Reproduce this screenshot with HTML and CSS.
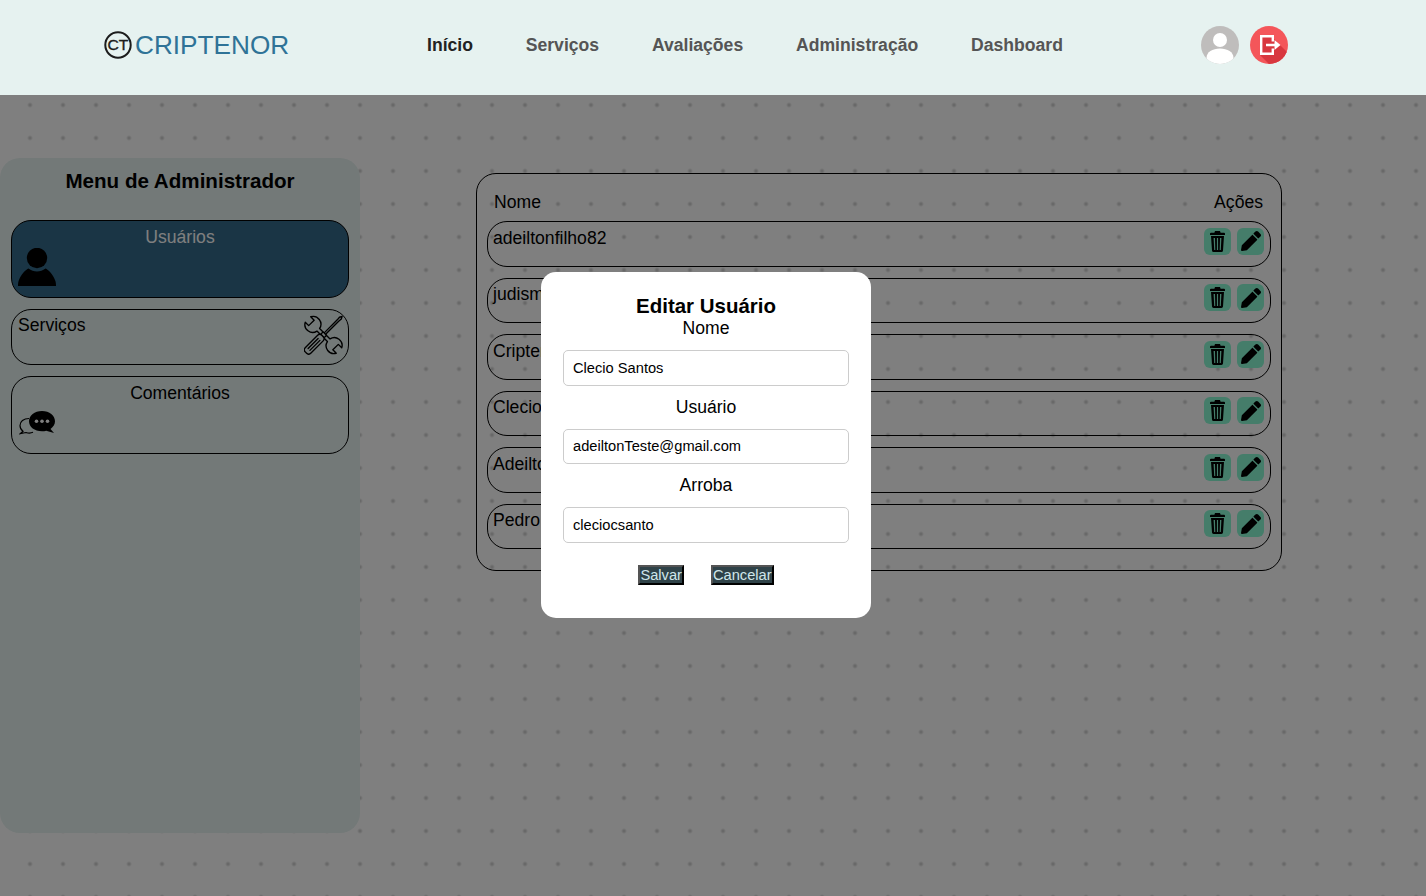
FILE: index.html
```html
<!DOCTYPE html>
<html lang="pt-BR">
<head>
<meta charset="utf-8">
<title>Criptenor</title>
<link rel="stylesheet" href="styles.css">
</head>
<body>
<svg class="sprites" width="0" height="0" aria-hidden="true">
  <symbol id="trash" viewBox="0 0 15 21">
    <path d="M5 0h5l.6 1.700H14a1 1 0 0 1 1 1V4H0V2.700a1 1 0 0 1 1-1h3.400z"/>
    <path fill-rule="evenodd" d="M1 5h13l-1 14.500A1.600 1.600 0 0 1 11.400 21H3.600A1.600 1.600 0 0 1 2 19.500zM3.600 7l.6 12h1.100L5 7zM6.900 7v12h1.200V7zM10 7l-.3 12h1.100l.6-12z"/>
  </symbol>
  <symbol id="pencil" viewBox="0 0 512 512">
    <path d="M497.900 142.100l-46.100 46.100c-4.700 4.700-12.300 4.700-17 0l-111-111c-4.700-4.700-4.700-12.300 0-17l46.100-46.100c18.700-18.700 49.100-18.700 67.900 0l60.100 60.100c18.800 18.700 18.800 49.100 0 67.900zM284.200 99.800L21.600 362.400.4 483.900c-2.900 16.400 11.400 30.600 27.800 27.800l121.500-21.300 262.600-262.600c4.700-4.700 4.700-12.300 0-17l-111-111c-4.800-4.700-12.400-4.700-17.100 0z"/>
  </symbol>
</svg>

<header class="topbar">
  <a class="brand">
    <svg class="brand-mark" viewBox="0 0 28 28">
      <circle cx="14" cy="14" r="12.700" fill="none" stroke="#1c1c1c" stroke-width="2"/>
      <text x="14" y="18.800" text-anchor="middle" class="brand-ct" textLength="21" lengthAdjust="spacingAndGlyphs">CT</text>
    </svg>
    <span class="brand-name">CRIPTENOR</span>
  </a>
  <nav class="nav">
    <a class="nav-link is-current">Início</a>
    <a class="nav-link">Serviços</a>
    <a class="nav-link">Avaliações</a>
    <a class="nav-link">Administração</a>
    <a class="nav-link">Dashboard</a>
  </nav>
  <div class="top-icons">
    <svg class="round-icon" viewBox="0 0 38 38">
      <clipPath id="avatarClip"><circle cx="19" cy="19" r="19"/></clipPath>
      <g clip-path="url(#avatarClip)">
        <rect width="38" height="38" fill="#bfbdbc"/>
        <circle cx="19" cy="14" r="7" fill="#fff"/>
        <path d="M5.500 32c0-6 6-9.500 13.500-9.500S32.500 26 32.500 32c0 3.500-6 6-13.500 6s-13.500-2.500-13.500-6z" fill="#fff"/>
      </g>
    </svg>
    <svg class="round-icon" viewBox="0 0 38 38">
      <clipPath id="exitClip"><circle cx="19" cy="19" r="19"/></clipPath>
      <g clip-path="url(#exitClip)">
        <rect width="38" height="38" fill="#f4565a"/>
        <path d="M10 29 19 38H38V27L30 19 24 13V9H10z" fill="#d8373f"/>
        <path d="M10 9h14v6.500h-2.400v-4.100h-9.200v15.200h9.200v-4.100H24V29H10z" fill="#fff"/>
        <path d="M16 17.700h8.500V14L30.500 19l-6 5v-3.700H16z" fill="#fff"/>
      </g>
    </svg>
  </div>
</header>

<main class="page">
  <aside class="side">
    <h2 class="side-title">Menu de Administrador</h2>
    <div class="side-item tall is-active">
      <span class="side-label">Usuários</span>
      <svg class="ico-user" viewBox="0 0 38 38">
        <circle cx="19" cy="10" r="10.200"/>
        <path d="M0 38c0-1 0-3 .6-5C3 26 8 21.500 10.500 20.500c2.500 2 5.500 3 8.500 3s6-1 8.500-3C30 21.500 35 26 37.400 33c.6 2 .6 4 .6 5z"/>
      </svg>
    </div>
    <div class="side-item short">
      <span class="side-label">Serviços</span>
      <svg class="ico-tools" viewBox="0 0 40 40" stroke="#000" stroke-width="1.400" stroke-linejoin="round" stroke-linecap="round">
        <path class="tool-fill" d="M6.900 1.300 10.400 4.800 4.800 10.400 1.300 6.900A8 8 0 0 0 13.300 16L24 26.700A8 8 0 0 0 33.100 38.700L29.600 35.200 35.200 29.600 38.700 33.100A8 8 0 0 0 26.700 24L16 13.300A8 8 0 0 0 6.900 1.300Z"/>
        <g transform="translate(20 20) rotate(45)">
          <path class="tool-fill" d="M-1 -1V-21L-1.300 -24.500 0 -27 1.300 -24.500 1 -21V-1Z"/>
          <rect class="tool-fill" x="-2.500" y="-2" width="5" height="3.500" rx="1"/>
          <rect class="tool-fill" x="-4" y="1.500" width="8" height="24" rx="3"/>
          <path d="M-1.300 6.500V21M1.300 6.500V21"/>
        </g>
      </svg>
    </div>
    <div class="side-item tall">
      <span class="side-label">Comentários</span>
      <svg class="ico-chat" viewBox="0 0 36 24">
        <path fill="none" stroke="#000" stroke-width="1.200" d="M10 7.500C4.500 7.500 1 10.500 1 14.500c0 2.500 1 4.300 3 5.700L1.500 22.500 7 21.500c2.200.7 5 .7 7-.2"/>
        <path d="M23 0C15.500 0 10 4.500 10 10.300c0 5.700 5.500 10 13 10 1.500 0 3-.2 4.200-.6L35 22l-3.500-4C34.300 16 36 13.300 36 10.300 36 4.500 30.500 0 23 0z"/>
        <circle cx="17.500" cy="10.200" r="1.800" fill="#fff"/><circle cx="23" cy="10.200" r="1.800" fill="#fff"/><circle cx="28.500" cy="10.200" r="1.800" fill="#fff"/>
      </svg>
    </div>
  </aside>

  <section class="users">
    <div class="users-head"><span>Nome</span><span>Ações</span></div>
    <div class="user-row"><span>adeiltonfilho82</span><div class="acts"><button class="act"><svg class="i-trash"><use href="#trash"/></svg></button><button class="act"><svg class="i-pencil"><use href="#pencil"/></svg></button></div></div>
    <div class="user-row"><span>judismar</span><div class="acts"><button class="act"><svg class="i-trash"><use href="#trash"/></svg></button><button class="act"><svg class="i-pencil"><use href="#pencil"/></svg></button></div></div>
    <div class="user-row"><span>Criptenor</span><div class="acts"><button class="act"><svg class="i-trash"><use href="#trash"/></svg></button><button class="act"><svg class="i-pencil"><use href="#pencil"/></svg></button></div></div>
    <div class="user-row"><span>Clecio Santos</span><div class="acts"><button class="act"><svg class="i-trash"><use href="#trash"/></svg></button><button class="act"><svg class="i-pencil"><use href="#pencil"/></svg></button></div></div>
    <div class="user-row"><span>Adeilton</span><div class="acts"><button class="act"><svg class="i-trash"><use href="#trash"/></svg></button><button class="act"><svg class="i-pencil"><use href="#pencil"/></svg></button></div></div>
    <div class="user-row"><span>Pedro</span><div class="acts"><button class="act"><svg class="i-trash"><use href="#trash"/></svg></button><button class="act"><svg class="i-pencil"><use href="#pencil"/></svg></button></div></div>
  </section>
</main>

<div class="overlay"></div>

<form class="modal">
  <h3 class="modal-title">Editar Usuário</h3>
  <label class="field-label">Nome</label>
  <input class="field" value="Clecio Santos">
  <label class="field-label">Usuário</label>
  <input class="field" value="adeiltonTeste@gmail.com">
  <label class="field-label">Arroba</label>
  <input class="field" value="cleciocsanto">
  <div class="modal-actions">
    <button type="button" class="modal-btn">Salvar</button>
    <button type="button" class="modal-btn">Cancelar</button>
  </div>
</form>
</body>
</html>
```

FILE: styles.css
```css
* { box-sizing: border-box; }
html, body { margin: 0; height: 100%; }
body {
  font-family: "Liberation Sans", Arial, sans-serif;
  font-size: 17.6px;
  color: #000;
  overflow: hidden;
  background: #fff;
}
.sprites { position: absolute; }

.topbar {
  position: relative;
  z-index: 3;
  height: 95px;
  background: #e6f2f0;
  display: flex;
  align-items: center;
  padding: 0 0 5px 104px;
}
.brand { display: flex; align-items: center; gap: 3px; width: 323px; }
.brand-mark { width: 28px; height: 28px; flex: none; }
.brand-ct { font: 400 15px "Liberation Sans", Arial, sans-serif; fill: #1c1c1c; stroke: #1c1c1c; stroke-width: .35px; }
.brand-name { font-size: 26.2px; color: #2f7397; }
.nav { display: flex; gap: 52.8px; width: 774px; }
.nav-link { font-weight: 700; font-size: 17.6px; color: #555; }
.nav-link.is-current { color: #222; }
.top-icons { display: flex; gap: 11px; }
.round-icon { width: 38px; height: 38px; display: block; }

.page {
  height: 801px;
  display: flex;
  align-items: flex-start;
  background-color: #fff;
  background-image: radial-gradient(circle at center, #cdcdcd 0, #d2d2d2 1px, #fff 2.800px);
  background-size: 33px 33px;
  background-position: 13.5px -6.5px;
}
.side {
  width: 360px;
  height: 675px;
  margin-top: 63px;
  flex: none;
  background: #e6f2f0;
  border-radius: 20px;
  padding: 11px 11px 0;
}
.side-title { margin: 0 0 27px; font-size: 20.6px; line-height: 24px; font-weight: 700; text-align: center; }
.side-item {
  position: relative;
  border: 1px solid #000;
  border-radius: 20px;
  margin-bottom: 11px;
  padding: 5px 6px;
  line-height: 21px;
}
.side-item.tall { height: 78px; text-align: center; padding-top: 6px; }
.side-item.short { height: 56px; display: flex; justify-content: space-between; }
.side-item.is-active { background: #346a8a; color: #fff; }
.side-label { display: block; }
.ico-user { position: absolute; left: 6px; top: 27px; width: 38px; height: 38px; fill: #000; }
.ico-tools { width: 39px; height: 40px; flex: none; margin: 0 -1px 0 0; }
.tool-fill { fill: #e6f2f0; }
.ico-chat { position: absolute; left: 7px; top: 34px; width: 36px; height: 24px; }

.users {
  width: 806px;
  margin: 78px 0 0 116px;
  flex: none;
  border: 1px solid #000;
  border-radius: 20px;
  padding: 18px 10px 20.5px;
}
.users-head {
  display: flex;
  justify-content: space-between;
  padding: 0 8px 0 7px;
  line-height: 21px;
  margin-bottom: 8px;
}
.user-row {
  height: 45.5px;
  border: 1px solid #000;
  border-radius: 20px;
  display: flex;
  justify-content: space-between;
  align-items: flex-start;
  padding: 5.9px 6px 0 5px;
  line-height: 21px;
  margin-bottom: 11px;
}
.user-row:last-child { margin-bottom: 0; }
.acts { display: flex; gap: 6px; }
.act {
  width: 27px;
  height: 27px;
  padding: 0;
  border: 0;
  border-radius: 6px;
  background: #8afad4;
  display: flex;
  align-items: center;
  justify-content: center;
}
.i-trash { width: 15px; height: 21px; fill: #000; }
.i-pencil { width: 20px; height: 20px; fill: #000; }

.overlay {
  position: fixed;
  inset: 0;
  z-index: 1;
  background: rgba(0, 0, 0, .5);
}
.modal {
  position: fixed;
  z-index: 2;
  left: 541px;
  top: 272px;
  width: 330px;
  height: 346px;
  background: #fff;
  border-radius: 15px;
  padding: 22px;
  text-align: center;
}
.modal-title { margin: 0; font-size: 20.48px; line-height: 24px; font-weight: 700; }
.field-label { display: block; line-height: 21px; }
.field {
  display: block;
  width: 100%;
  height: 35.6px;
  margin: 11px 0;
  padding: 0 9px;
  border: 1px solid #ccc;
  border-radius: 5px;
  background: #fff;
  color: #000;
  font: 14.67px "Liberation Sans", Arial, sans-serif;
}
.modal-actions { display: flex; justify-content: center; gap: 27px; margin-top: 22px; }
.modal-btn {
  height: 20px;
  padding: 0;
  border: 2px outset #000;
  background: #2f4248;
  color: #cfe6ea;
  font: 14.67px/16px "Liberation Sans", Arial, sans-serif;
}
```
